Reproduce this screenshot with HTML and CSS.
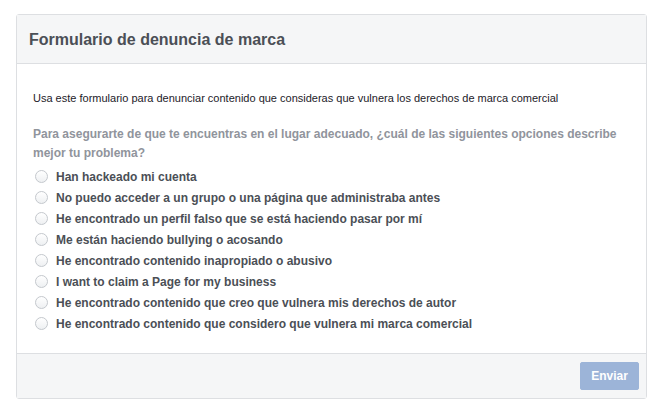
FILE: index.html
```html
<!DOCTYPE html>
<html lang="es">
<head>
<meta charset="utf-8">
<title>Formulario de denuncia de marca</title>
<link rel="stylesheet" href="styles.css">
</head>
<body>
<div class="card">
  <div class="card-header">Formulario de denuncia de marca</div>
  <div class="card-body">
    <p class="intro">Usa este formulario para denunciar contenido que consideras que vulnera los derechos de marca comercial</p>
    <p class="question">Para asegurarte de que te encuentras en el lugar adecuado, ¿cuál de las siguientes opciones describe mejor tu problema?</p>
    <ul class="options">
      <li><span class="radio"></span>Han hackeado mi cuenta</li>
      <li><span class="radio"></span>No puedo acceder a un grupo o una página que administraba antes</li>
      <li><span class="radio"></span>He encontrado un perfil falso que se está haciendo pasar por mí</li>
      <li><span class="radio"></span>Me están haciendo bullying o acosando</li>
      <li><span class="radio"></span>He encontrado contenido inapropiado o abusivo</li>
      <li><span class="radio"></span>I want to claim a Page for my business</li>
      <li><span class="radio"></span>He encontrado contenido que creo que vulnera mis derechos de autor</li>
      <li><span class="radio"></span>He encontrado contenido que considero que vulnera mi marca comercial</li>
    </ul>
  </div>
  <div class="card-footer">
    <button class="btn" type="button">Enviar</button>
  </div>
</div>
</body>
</html>
```
FILE: styles.css
```css
html, body {
  margin: 0;
  padding: 0;
  background: #ffffff;
}
body {
  padding: 14px 15px 0 16px;
  font-family: "Liberation Sans", Arial, sans-serif;
}
.card {
  width: 631px;
  border: 1px solid #dddfe2;
  border-radius: 3px;
  box-sizing: border-box;
}
.card-header {
  background: #f5f6f7;
  border-bottom: 1px solid #dddfe2;
  height: 49px;
  box-sizing: border-box;
  padding: 15px 12px 0 12px;
  font-size: 16px;
  font-weight: bold;
  color: #4b4f56;
  line-height: 20px;
}
.card-body {
  padding: 27px 16px 19px 16px;
}
.intro {
  margin: 0 0 20px 0;
  font-size: 11px;
  line-height: 14px;
  color: #1d2129;
}
.question {
  margin: 0 0 3px 0;
  font-size: 12px;
  font-weight: bold;
  line-height: 19px;
  color: #90949c;
}
.options {
  list-style: none;
  margin: 0;
  padding: 0;
}
.options li {
  display: flex;
  align-items: center;
  height: 21px;
  font-size: 12px;
  font-weight: bold;
  color: #4b4f56;
}
.radio {
  width: 13px;
  height: 13px;
  border: 1px solid #c4c8cd;
  border-radius: 50%;
  background: linear-gradient(#ffffff, #eef0f2);
  margin: 0 8px 0 2px;
  box-sizing: border-box;
  flex-shrink: 0;
}
.card-footer {
  background: #f5f6f7;
  border-top: 1px solid #dddfe2;
  height: 45px;
  box-sizing: border-box;
  display: flex;
  justify-content: flex-end;
  align-items: flex-start;
  padding: 8px 7px 0 0;
}
.btn {
  width: 59px;
  height: 28px;
  background: #9cb4d8;
  border: 1px solid #9cb4d8;
  border-radius: 2px;
  color: #ffffff;
  font-family: "Liberation Sans", Arial, sans-serif;
  font-size: 12px;
  font-weight: bold;
  padding: 0;
}
```
